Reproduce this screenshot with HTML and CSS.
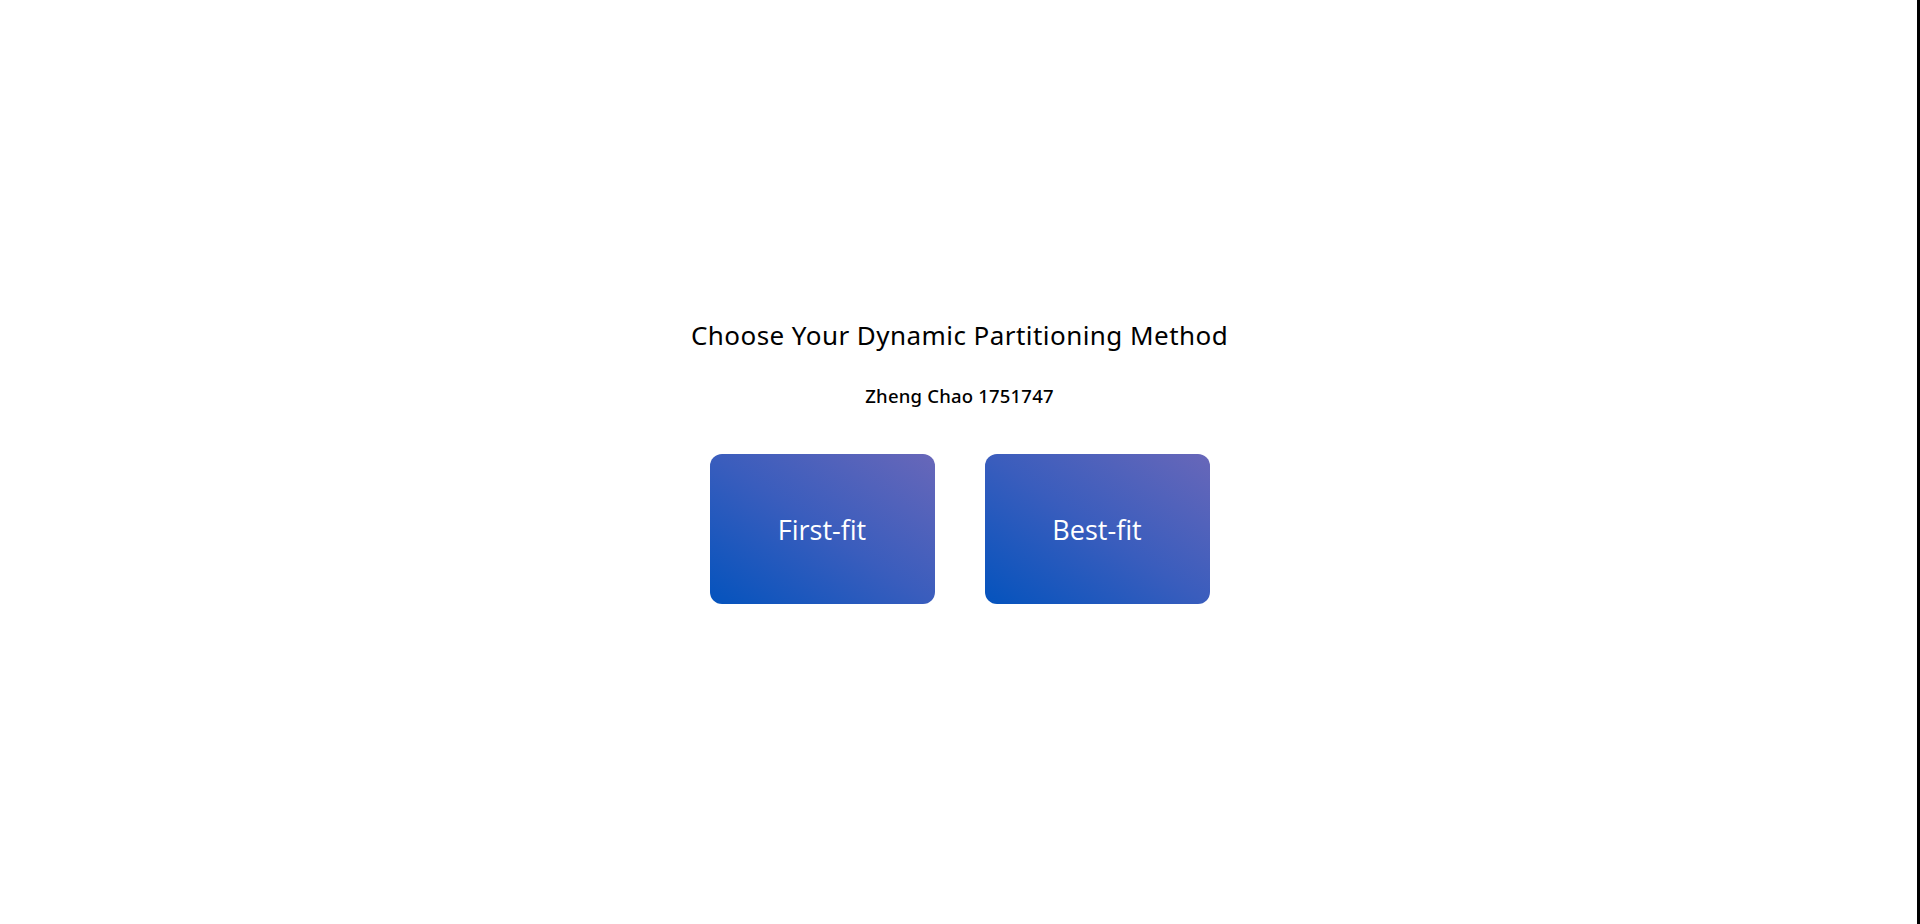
FILE: index.html
```html
<!DOCTYPE html>
<html lang="en">
<head>
<meta charset="utf-8">
<title>Dynamic Partitioning</title>
<link rel="stylesheet" href="styles.css">
</head>
<body>
<div class="page">
  <main class="chooser">
    <h1 class="title">Choose Your Dynamic Partitioning Method</h1>
    <p class="author">Zheng Chao 1751747</p>
    <div class="methods">
      <a class="method" href="#">First-fit</a>
      <a class="method" href="#">Best-fit</a>
    </div>
  </main>
</div>
</body>
</html>
```
FILE: styles.css
```css
html, body {
  margin: 0;
  padding: 0;
  height: 100%;
  background: #fff;
}
.page {
  height: 924px;
  box-sizing: border-box;
  border-right: 3px solid #000;
  display: flex;
  flex-direction: column;
}
.chooser {
  padding-top: 319px;
  padding-left: 2px;
  display: flex;
  flex-direction: column;
  align-items: center;
}
.title {
  margin: 0;
  font-family: "Noto Sans", sans-serif;
  font-weight: 400;
  font-size: 26px;
  line-height: 32px;
  letter-spacing: 0.45px;
  color: #000;
}
.author {
  margin: 33px 0 0;
  font-family: "Noto Sans", sans-serif;
  font-weight: 500;
  font-size: 18.5px;
  line-height: 24px;
  letter-spacing: 0.2px;
  color: #000;
}
.methods {
  margin-top: 46px;
  display: flex;
  gap: 50px;
}
.method {
  width: 225px;
  height: 150px;
  border-radius: 12px;
  background: linear-gradient(to top right, #0453bd 0%, #3a5dbd 50%, #6867b9 100%);
  display: flex;
  align-items: center;
  justify-content: center;
  color: #fff;
  text-decoration: none;
  font-family: "Open Sans", sans-serif;
  font-size: 27px;
}
```
